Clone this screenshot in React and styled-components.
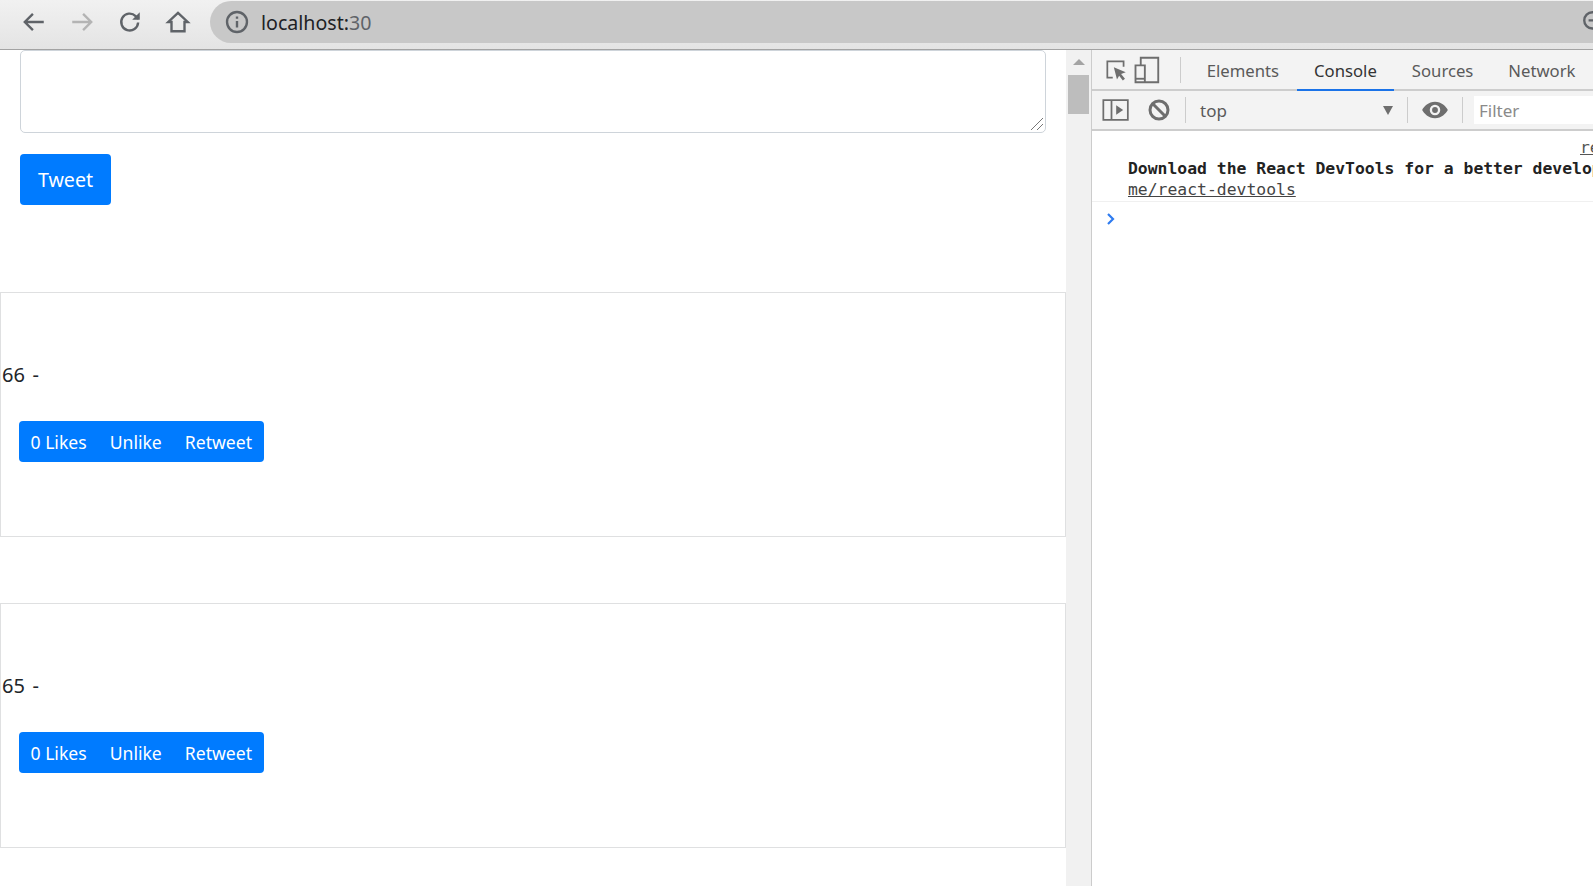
import React from 'react';
import styled, { createGlobalStyle } from 'styled-components';

const GlobalStyle = createGlobalStyle`
  html, body {
    margin: 0;
    padding: 0;
    background: #fff;
    overflow: hidden;
  }
  * {
    box-sizing: border-box;
  }
`;

const Frame = styled.div`
  width: 1593px;
  height: 886px;
  display: flex;
  flex-direction: column;
  overflow: hidden;
  font-family: "Noto Sans", "Open Sans", sans-serif;
  color: #212529;
`;

const BrowserBar = styled.header`
  height: 50px;
  flex: none;
  display: flex;
  align-items: flex-start;
  padding: 1px 0 0 9.5px;
  background: linear-gradient(#f1f1f1, #e4e4e4);
  border-bottom: 1px solid #a3a3a3;
`;

const NavButton = styled.span`
  width: 48px;
  height: 42px;
  display: flex;
  align-items: center;
  justify-content: center;
  color: ${(p) => (p.$off ? '#b4b4b4' : '#5f6368')};
`;

const UrlPill = styled.div`
  flex: 1;
  height: 42px;
  margin-left: 8.5px;
  padding: 0 0 0 14px;
  display: flex;
  align-items: center;
  gap: 11px;
  background: #c8c8c8;
  border-radius: 21px 0 0 21px;
  font-size: 19.6px;
  overflow: hidden;
  color: #5f6368;
`;

const Host = styled.span`
  color: #202124;
`;

const Port = styled.span`
  flex: 1;
  margin-left: -11px;
`;

const ZoomIcon = styled.span`
  flex: none;
  display: flex;
  margin-right: -14px;
  color: #5f6368;
`;

const Body = styled.div`
  flex: 1;
  display: flex;
  min-height: 0;
`;

const Page = styled.main`
  width: 1066px;
  flex: none;
  overflow: hidden;
`;

const TweetForm = styled.form`
  padding: 0 20px;
`;

const InputWrap = styled.div`
  position: relative;
`;

const TweetInput = styled.textarea`
  display: block;
  width: 100%;
  height: 83px;
  padding: 8px 12px;
  border: 1px solid #ced4da;
  border-radius: 5px;
  background: #fff;
  outline: none;
  resize: none;
`;

const ResizeGrip = styled.svg`
  position: absolute;
  right: 2px;
  bottom: 2px;
`;

const TweetButton = styled.button`
  display: block;
  width: 91px;
  height: 51px;
  margin-top: 21px;
  padding: 0;
  border: none;
  border-radius: 4px;
  background: #007bff;
  color: #fff;
  font: 19.6px "Noto Sans", sans-serif;
`;

const TweetList = styled.section`
  margin-top: 87px;
  display: flex;
  flex-direction: column;
  gap: 66px;
`;

const Card = styled.article`
  height: 245px;
  padding-top: 67px;
  border: 1px solid #dfe0e1;
  font-size: 20px;
  line-height: 30px;
`;

const CardText = styled.p`
  margin: 0 0 0 1px;
  word-spacing: 2.5px;
`;

const ButtonGroup = styled.div`
  display: inline-flex;
  height: 41px;
  margin: 31px 0 0 18px;
  border-radius: 4px;
  background: #007bff;
`;

const GroupButton = styled.button`
  padding: 0 11.5px;
  border: none;
  background: none;
  color: #fff;
  font: 17.6px "Noto Sans", sans-serif;
`;

const Scrollbar = styled.div`
  width: 25px;
  flex: none;
  padding: 9px 2px 0;
  display: flex;
  flex-direction: column;
  align-items: center;
  background: #f1f1f1;
`;

const ScrollArrow = styled.span`
  width: 0;
  height: 0;
  border-left: 6px solid transparent;
  border-right: 6px solid transparent;
  border-bottom: 6px solid #a3a3a3;
`;

const ScrollThumb = styled.div`
  width: 100%;
  height: 39px;
  margin-top: 10px;
  background: #bdbdbd;
`;

const DevTools = styled.aside`
  flex: 1;
  min-width: 0;
  display: flex;
  flex-direction: column;
  border-left: 1px solid #ccc;
  overflow: hidden;
`;

const TabBar = styled.div`
  height: 41px;
  flex: none;
  display: flex;
  align-items: center;
  padding-left: 11px;
  background: #f3f3f3;
  border-bottom: 2px solid #cdcdcd;
`;

const ToolIcon = styled.span`
  width: ${(p) => p.$w || 40}px;
  display: flex;
  justify-content: center;
  color: #6e6e6e;
`;

const Divider = styled.span`
  width: 1px;
  height: 26px;
  flex: none;
  background: #ccc;
  margin: ${(p) => p.$m || '0 9px'};
`;

const Tab = styled.span`
  position: relative;
  height: 39px;
  line-height: 41px;
  padding: 0 17.5px;
  font-size: 16.7px;
  white-space: nowrap;
  color: ${(p) => (p.$active ? '#333' : '#5a5a5a')};

  ${(p) =>
    p.$active &&
    `
    &::after {
      content: '';
      position: absolute;
      left: 0;
      right: 0;
      bottom: -2px;
      height: 2px;
      background: #1a73e8;
    }
  `}
`;

const ConsoleBar = styled.div`
  height: 40px;
  flex: none;
  display: flex;
  align-items: center;
  padding-left: 3px;
  background: #f3f3f3;
  border-bottom: 2px solid #cdcdcd;
`;

const ContextSelect = styled.div`
  width: 201px;
  display: flex;
  align-items: center;
  justify-content: space-between;
  padding-right: 8px;
  font-size: 17px;
  color: #5a5a5a;
`;

const Caret = styled.span`
  width: 0;
  height: 0;
  border-left: 5.5px solid transparent;
  border-right: 5.5px solid transparent;
  border-top: 9px solid #6e6e6e;
`;

const FilterBox = styled.div`
  flex: 1;
  height: 28px;
  padding-left: 5px;
  line-height: 30px;
  background: #fff;
  font-size: 17px;
  color: #8a8a8a;
`;

const ConsoleLog = styled.div`
  flex: 1;
  padding-top: 6px;
  font: 16.4px/21px "DejaVu Sans Mono", monospace;
  color: #222;
`;

const SourceLink = styled.div`
  height: 21px;
  padding-left: 488px;
  white-space: nowrap;
  color: #555;
  text-decoration: underline;
`;

const Message = styled.div`
  padding: 0 0 1px 36px;
  border-bottom: 1px solid #f0f0f0;
  white-space: nowrap;
`;

const MessageTitle = styled.div`
  font-weight: 700;
`;

const MessageLink = styled.span`
  color: #444;
  text-decoration: underline;
`;

const Prompt = styled.div`
  padding: 10px 0 0 14px;
  color: #2f7cf0;
  display: flex;
`;

function Icon({ size = 26, children, fill = 'none', strokeWidth = 2.2 }) {
  return (
    <svg width={size} height={size} viewBox="0 0 24 24" fill={fill} stroke="currentColor" strokeWidth={strokeWidth}>
      {children}
    </svg>
  );
}

function Tweet({ id }) {
  return (
    <Card>
      <CardText>{id} -</CardText>
      <ButtonGroup>
        <GroupButton>0 Likes</GroupButton>
        <GroupButton>Unlike</GroupButton>
        <GroupButton>Retweet</GroupButton>
      </ButtonGroup>
    </Card>
  );
}

export default function App() {
  return (
    <>
      <GlobalStyle />
      <Frame>
        <BrowserBar>
          <NavButton>
            <Icon><path d="M21 12H4M11 4.5 3.5 12l7.5 7.5" /></Icon>
          </NavButton>
          <NavButton $off>
            <Icon><path d="M3 12h17M13 4.5l7.5 7.5-7.5 7.5" /></Icon>
          </NavButton>
          <NavButton>
            <Icon>
              <path d="M19.5 12.5a7.8 7.8 0 1 1-2.3-6L20 9" />
              <path d="M21 3v7h-7z" fill="currentColor" stroke="none" />
            </Icon>
          </NavButton>
          <NavButton>
            <Icon><path d="M12 3.5 3 12h3v8.5h12V12h3z" /></Icon>
          </NavButton>
          <UrlPill>
            <Icon size={26}>
              <circle cx="12" cy="12" r="9.2" />
              <path d="M12 11v6M12 7v2" />
            </Icon>
            <Host>localhost:</Host>
            <Port>30</Port>
            <ZoomIcon>
              <Icon size={26}>
                <circle cx="10.500" cy="10.500" r="7.500" />
                <path d="M7 10.500h7M16 16l6 6" />
              </Icon>
            </ZoomIcon>
          </UrlPill>
        </BrowserBar>
        <Body>
          <Page>
            <TweetForm>
              <InputWrap>
                <TweetInput />
                <ResizeGrip width="14" height="14" viewBox="0 0 14 14" fill="none" stroke="#777" strokeWidth="1">
                  <path d="M1 13 13 1M7 13l6-6" />
                </ResizeGrip>
              </InputWrap>
              <TweetButton type="button">Tweet</TweetButton>
            </TweetForm>
            <TweetList>
              <Tweet id={66} />
              <Tweet id={65} />
            </TweetList>
          </Page>
          <Scrollbar>
            <ScrollArrow />
            <ScrollThumb />
          </Scrollbar>
          <DevTools>
            <TabBar>
              <ToolIcon $w={28}>
                <Icon size={26} strokeWidth={1.6}>
                  <path d="M9 19H4V4h15v5" />
                  <path d="M10 9.5 21 14l-4.300 1.700 3.600 4.300-2 1.600-3.400-4.300-2 3.400z" fill="currentColor" stroke="none" />
                </Icon>
              </ToolIcon>
              <ToolIcon $w={52}>
                <Icon size={28} strokeWidth={1.6}>
                  <path d="M7.500 8V1.500h15v21H3V8h8v14.500" />
                  <path d="M3 19.500h8" />
                </Icon>
              </ToolIcon>
              <Divider $m="0 8px 0 17px" />
              <Tab>Elements</Tab>
              <Tab $active>Console</Tab>
              <Tab>Sources</Tab>
              <Tab>Network</Tab>
            </TabBar>
            <ConsoleBar>
              <ToolIcon $w={40}>
                <Icon size={28} strokeWidth={1.5}>
                  <path d="M2 3.500h21v17H2zM9 3.500v17" />
                  <path d="M13 8l6 4-6 4z" fill="currentColor" stroke="none" />
                </Icon>
              </ToolIcon>
              <ToolIcon $w={48}>
                <Icon size={24} strokeWidth={3}>
                  <circle cx="12" cy="12" r="9" />
                  <path d="M5.500 5.500l13 13" />
                </Icon>
              </ToolIcon>
              <Divider $m="0 14px 0 2px" />
              <ContextSelect>
                top
                <Caret />
              </ContextSelect>
              <Divider $m="0 13px 0 6px" />
              <ToolIcon $w={28}>
                <Icon size={28} fill="currentColor" strokeWidth={0}>
                  <path d="M12 5C6.500 5 2.500 9 1 12c1.500 3 5.500 7 11 7s9.500-4 11-7c-1.500-3-5.500-7-11-7zm0 11.500a4.500 4.500 0 1 1 0-9 4.500 4.500 0 0 1 0 9zm0-7a2.500 2.500 0 1 0 0 5 2.500 2.500 0 0 0 0-5z" />
                </Icon>
              </ToolIcon>
              <Divider $m="0 11px 0 13px" />
              <FilterBox>Filter</FilterBox>
            </ConsoleBar>
            <ConsoleLog>
              <SourceLink>re</SourceLink>
              <Message>
                <MessageTitle>Download the React DevTools for a better development experience: https://fb.</MessageTitle>
                <MessageLink>me/react-devtools</MessageLink>
              </Message>
              <Prompt>
                <svg width="10" height="14" viewBox="0 0 10 14" fill="none" stroke="currentColor" strokeWidth="2.200">
                  <path d="M2 2l5 5-5 5" />
                </svg>
              </Prompt>
            </ConsoleLog>
          </DevTools>
        </Body>
      </Frame>
    </>
  );
}
